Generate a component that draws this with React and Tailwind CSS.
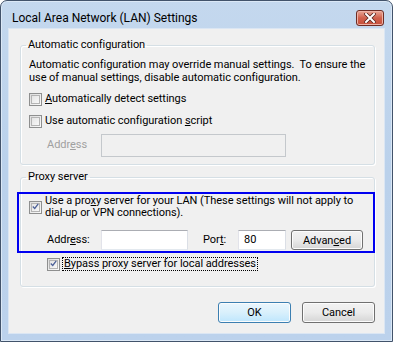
const font = "font-['Roboto',sans-serif]";

const Check = ({ checked }) => (
    <span className="flex h-[13px] w-[13px] shrink-0 items-center justify-center border border-[#8e8f8f] bg-gradient-to-br from-[#dcdcdc] to-[#fbfbfb]">
        <span className="flex h-[9px] w-[9px] items-center justify-center border border-[#b4b4b4] bg-gradient-to-br from-[#e4e4e4] to-[#f8f8f8]">
            {checked && (
                <svg width="9" height="9" viewBox="0 0 9 9" className="-mt-[1px]">
                    <path d="M1 4.5 L3.5 7 L8 1" fill="none" stroke="#4a5f97" strokeWidth="1.6" />
                </svg>
            )}
        </span>
    </span>
);

const Button = ({ children, primary, className = "" }) => (
    <div className={`flex items-center justify-center rounded-[3px] border leading-none text-black shadow-[inset_0_0_0_1px_#fcfcfc] ${primary ? "border-[#3c7fb1] bg-gradient-to-b from-[#eaf6fd] via-[#d9f0fc] to-[#bee6fd]" : "border-[#707070] bg-gradient-to-b from-[#f2f2f2] via-[#ebebeb] to-[#d5d5d5]"} ${className}`}>
        {children}
    </div>
);

const GroupBox = ({ label, className = "", children }) => (
    <fieldset className={`min-w-0 rounded-[3px] border border-[#d5dfe5] px-[8px] shadow-[inset_1px_1px_0_#ffffff,1px_1px_0_#ffffff] ${className}`}>
        <legend className="-ml-[3px] px-[2px] leading-[16px]">{label}</legend>
        {children}
    </fieldset>
);

export default function App() {
    return (
        <div className={`h-[343px] w-[394px] bg-white text-[11px] tracking-[-0.05px] text-black ${font}`}>
            <div className="flex h-[342px] w-[393px] flex-col rounded-t-[7px] border border-[#42536b] bg-gradient-to-b from-[#c4d8ee] via-[#bad1eb] to-[#bcd2ec] px-[7px] pb-[7px] shadow-[inset_0_0_0_1px_#dbe8f6]">
                {/* Title bar */}
                <div className="flex h-[27px] shrink-0 items-start justify-between">
                    <span className="ml-[4px] mt-[9px] text-[12px] leading-[16px] tracking-normal">Local Area Network (LAN) Settings</span>
                    <div className="mr-[1px] mt-[9px] flex h-[16px] w-[28px] items-center justify-center rounded-[3px] border border-[#6e2c24] bg-gradient-to-b from-[#e8a696] via-[#d0604c] to-[#c6503c] shadow-[inset_0_0_0_1px_#eeb2a6]">
                        <svg width="12" height="10" viewBox="0 0 12 10">
                            <path d="M2 1 L10 9 M10 1 L2 9" stroke="#5a2620" strokeWidth="3.6" strokeLinecap="square" />
                            <path d="M2 1 L10 9 M10 1 L2 9" stroke="#ffffff" strokeWidth="2" strokeLinecap="square" />
                        </svg>
                    </div>
                </div>

                {/* Client */}
                <div className="flex flex-1 flex-col border border-[#dbe6f3] bg-[#f0f0f0] pl-[11px] pr-[9px] pt-[8px]">
                    <GroupBox label="Automatic configuration" className="pb-[7px] pt-[5px]">
                        <p className="leading-[13px]">
                            <span className="block whitespace-pre">Automatic configuration may override manual settings.  To ensure the</span>
                            <span className="block">use of manual settings, disable automatic configuration.</span>
                        </p>
                        <label className="mt-[7px] flex h-[16px] items-center gap-[3px]">
                            <Check />
                            <span><u>A</u>utomatically detect settings</span>
                        </label>
                        <label className="mt-[6px] flex h-[16px] items-center gap-[3px]">
                            <Check />
                            <span>Use automatic configuration <u>s</u>cript</span>
                        </label>
                        <div className="mt-[5px] flex items-center">
                            <span className="ml-[18px] w-[54px] text-[#a0a0a0]">Addr<u>e</u>ss</span>
                            <div className="h-[23px] w-[185px] border border-[#c4c8cc] bg-[#f0f0f0]" />
                        </div>
                    </GroupBox>

                    <GroupBox label="Proxy server" className="mt-[4px] pb-[15px] pt-[10px]">
                        <div className="relative">
                            <div className="pointer-events-none absolute -bottom-[3px] -left-[12px] -right-[9px] -top-[3px] border-2 border-[#0000f0]" />
                            <label className="flex items-center gap-[3px]">
                                <Check checked />
                                <span className="leading-[12px]">
                                    <span className="block">Use a pro<u>x</u>y server for your LAN (These settings will not apply to</span>
                                    <span className="block">dial-up or VPN connections).</span>
                                </span>
                            </label>
                            <div className="mt-[11px] flex h-[20px] items-center">
                                <span className="ml-[18px] w-[54px]">Addr<u>e</u>ss:</span>
                                <div className="h-[20px] w-[87px] border border-[#abadb3] border-l-[#e2e3ea] border-r-[#dbdfe6] border-b-[#e3e9ef] bg-white" />
                                <span className="ml-[15px] w-[35px]">Por<u>t</u>:</span>
                                <div className="flex h-[20px] w-[48px] items-center border border-[#abadb3] border-l-[#e2e3ea] border-r-[#dbdfe6] border-b-[#e3e9ef] bg-white pl-[5px]">80</div>
                                <Button className="ml-[5px] h-[20px] w-[72px]">Advan<u>c</u>ed</Button>
                            </div>
                        </div>
                        <label className="ml-[18px] mt-[7px] flex h-[14px] items-center gap-[2px]">
                            <Check checked />
                            <span className="border border-dotted border-black px-[1px] leading-[12px]"><u>B</u>ypass proxy server for local addresses</span>
                        </label>
                    </GroupBox>

                    <div className="mt-[15px] flex justify-end gap-[11px]">
                        <Button primary className="h-[21px] w-[73px]">OK</Button>
                        <Button className="h-[21px] w-[73px]">Cancel</Button>
                    </div>
                </div>
            </div>
        </div>
    );
}
